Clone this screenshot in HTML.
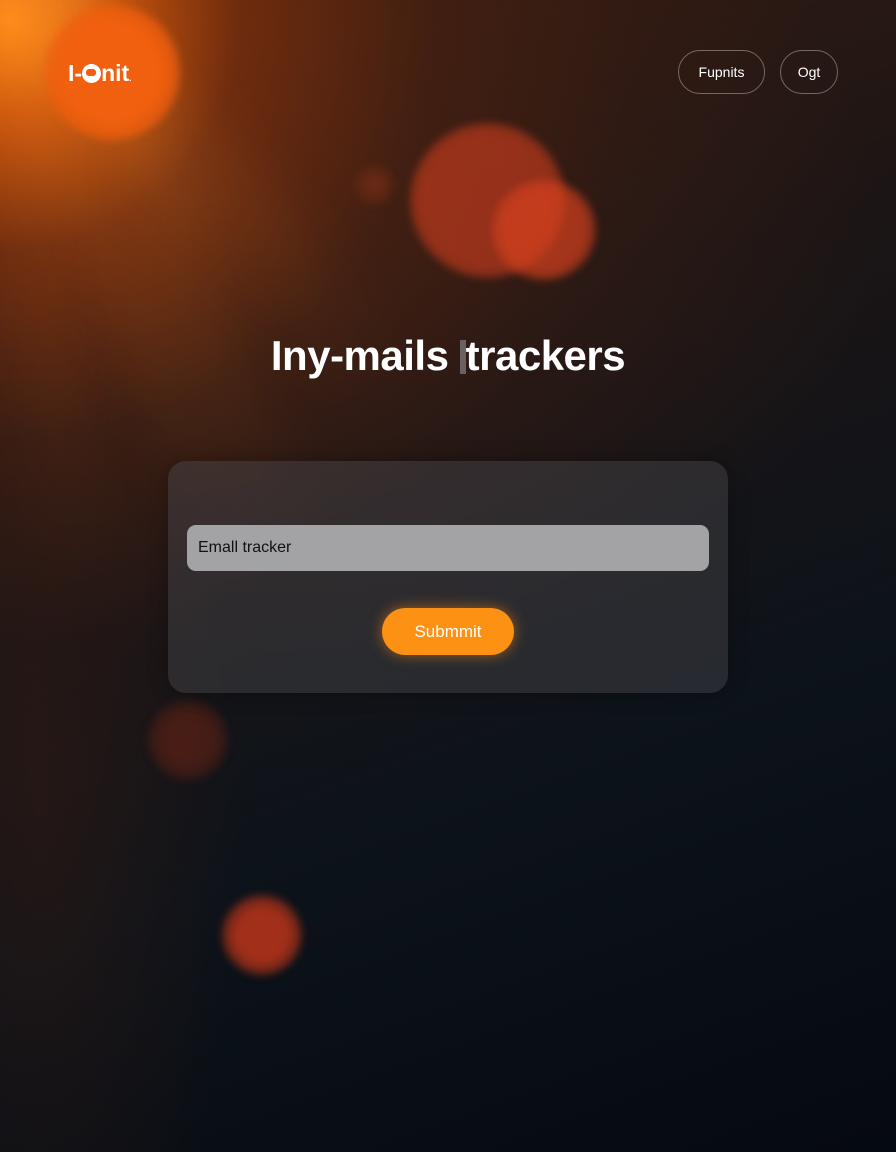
<!DOCTYPE html>
<html><head><meta charset="utf-8"><style>
*{margin:0;padding:0;box-sizing:border-box}
html,body{width:896px;height:1152px;overflow:hidden}
#w{position:absolute;left:0;top:0;width:896px;height:1152px;overflow:hidden;font-family:"Liberation Sans",sans-serif;
background:
radial-gradient(circle at 10px 20px, rgba(255,140,20,1) 0, rgba(240,100,10,.8) 90px, rgba(170,60,10,.45) 230px, rgba(100,40,15,.2) 420px, rgba(0,0,0,0) 620px),
radial-gradient(ellipse 600px 450px at 280px 220px, rgba(80,35,18,.55), rgba(0,0,0,0) 100%),
radial-gradient(ellipse 200px 600px at 40px 800px, rgba(70,30,15,.35), rgba(0,0,0,0) 100%),
linear-gradient(160deg,#3a1d10 0%,#1c1515 35%,#0d131a 65%,#050a10 100%);}
.ray{position:absolute;left:-40px;top:-40px;transform-origin:0 0;height:900px;filter:blur(22px)}
.b{position:absolute;border-radius:50%;filter:blur(4px)}
.logo{position:absolute;left:68px;top:60px;color:#fff;font-weight:bold;font-size:23px}
.pill{position:absolute;top:50px;height:44px;border:1px solid rgba(255,255,255,.35);border-radius:22px;color:#fff;font-size:14px;display:flex;align-items:center;justify-content:center}
h1{position:absolute;top:332px;left:0;width:896px;text-align:center;color:#fff;font-size:42px;font-weight:bold;letter-spacing:-.5px}
.card{position:absolute;left:168px;top:461px;width:560px;height:232px;border-radius:18px;background:rgba(70,70,75,.45);box-shadow:0 0 20px rgba(0,0,0,.3)}
.inp{position:absolute;left:19px;top:64px;width:522px;height:46px;border-radius:9px;background:#a3a3a5;color:#111;font-size:16px;padding:14px 11px}
.btn{position:absolute;left:214px;top:147px;width:132px;height:47px;border-radius:24px;background:#fd9114;color:#fff;font-size:17px;display:flex;align-items:center;justify-content:center;box-shadow:0 0 14px rgba(255,140,20,.55)}
</style></head><body><div id="w">
<div class="ray" style="width:120px;transform:rotate(-22deg);background:linear-gradient(rgba(255,140,40,.22),rgba(255,120,30,0) 75%)"></div>
<div class="ray" style="width:90px;transform:rotate(-40deg);background:linear-gradient(rgba(255,150,50,.2),rgba(255,120,30,0) 65%)"></div>
<div class="ray" style="width:70px;transform:rotate(-8deg);background:linear-gradient(rgba(255,130,40,.15),rgba(255,120,30,0) 70%)"></div>
<div class="b" style="left:45px;top:5px;width:135px;height:135px;background:radial-gradient(circle,#f0600e 50%,rgba(240,90,14,.5) 80%,rgba(240,90,14,0) 100%)"></div>
<div class="b" style="left:410px;top:123px;width:155px;height:155px;background:radial-gradient(circle,rgba(200,60,30,.65) 60%,rgba(200,60,30,0) 100%)"></div>
<div class="b" style="left:492px;top:180px;width:104px;height:100px;background:radial-gradient(circle,rgba(215,65,30,.7) 55%,rgba(215,65,30,0) 100%)"></div>
<div class="b" style="left:355px;top:165px;width:40px;height:40px;background:radial-gradient(circle,rgba(170,60,30,.4),rgba(170,60,30,0))"></div>
<div class="b" style="left:148px;top:700px;width:80px;height:80px;background:radial-gradient(circle,rgba(120,38,20,.5) 40%,rgba(120,40,20,0) 100%)"></div>
<div class="b" style="left:222px;top:895px;width:80px;height:80px;background:radial-gradient(circle,rgba(200,55,25,.8) 45%,rgba(200,55,25,0) 100%)"></div>
<div class="logo">I-<span style="display:inline-block;width:19px;height:19px;border-radius:50%;background:#fff;vertical-align:-2px;position:relative"><span style="position:absolute;left:4px;top:5px;width:10px;height:7px;background:#f06010;border-radius:3px"></span></span>nit<span style="font-size:8px">.</span></div>
<div class="pill" style="left:678px;width:87px">Fupnits</div>
<div class="pill" style="left:780px;width:58px">Ogt</div>
<h1>Iny-mails <span style="display:inline-block;width:6px;height:34px;background:#6a6260;vertical-align:-4px"></span>trackers</h1>
<div class="card"><div class="inp">Emall tracker</div><div class="btn">Submmit</div></div>
</div></body></html>
